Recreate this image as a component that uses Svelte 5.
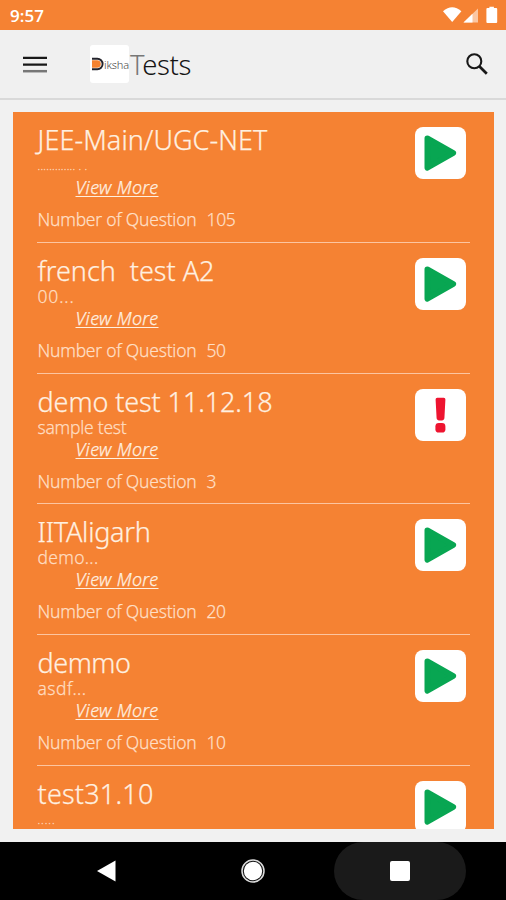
<script>
  const tests = [
    { title: 'JEE-Main/UGC-NET', w: 230, desc: '............. . .', dw: 50, tiny: true, count: '105', cw: 29, open: true },
    { title: 'french\u00a0 test A2', w: 177, desc: '00...', dw: 37, count: '50', cw: 19, open: true },
    { title: 'demo test 11.12.18', w: 235, desc: 'sample test', dw: 89, count: '3', cw: 9, open: false },
    { title: 'IITAligarh', w: 113, desc: 'demo...', dw: 61, count: '20', cw: 19, open: true },
    { title: 'demmo', w: 93, desc: 'asdf...', dw: 49, count: '10', cw: 19, open: true },
    { title: 'test31.10', w: 116, desc: '.....', dw: 18, tiny: true, count: '', cw: 0, open: true }
  ];

  // Tracks a line of text out so that it fills the given width.
  function fit(node, width) {
    const n = node.textContent.length;
    if (!n) return;
    const gap = (width - node.getBoundingClientRect().width) / n;
    node.style.letterSpacing = `${gap}px`;
  }
</script>

<div class="screen">
  <div class="status">
    <span class="clock" use:fit={34}>9:57</span>
    <svg class="signals" width="56" height="18" viewBox="0 0 56 18">
      <path d="M0 5.2Q9.2-2.6 18.4 5.2L9.2 16Z" fill="#fff" />
      <path d="M20.5 16.5L35 2.5V16.5Z" fill="#fbc6a2" />
      <path d="M20.5 16.5L29.5 7.8V16.5Z" fill="#fff" />
      <path d="M46.4 2V.8h4.5V2h2.3q1 0 1 1v13q0 1-1 1h-8.8q-1 0-1-1V3q0-1 1-1Z" fill="#fff" />
    </svg>
  </div>

  <header>
    <svg class="menu" width="24" height="18" viewBox="0 0 24 18">
      <path d="M0 1.8h24M0 8.6h24" stroke="#181818" stroke-width="2.3" />
      <path d="M0 15.2h24" stroke="#777" stroke-width="2.5" />
    </svg>
    <div class="logo">
      <svg width="12" height="14" viewBox="0 0 12 14">
        <path d="M0 3.2H5A3.8 3.8 0 0 1 5 10.8H0Z" fill="#f5822f" />
        <path d="M0 1.7H5.3A5.3 5.3 0 0 1 5.3 12.3H0" fill="none" stroke="#24242c" stroke-width="1.9" />
      </svg>
      <span use:fit={25}>iksha</span>
    </div>
    <h1 use:fit={61}><i>T</i>ests</h1>
    <svg class="search" width="22" height="22" viewBox="0 0 22 22" fill="none" stroke="#181818">
      <circle cx="8.3" cy="8.3" r="7" stroke-width="2.1" />
      <path d="M13.3 13.3L20.8 20.8" stroke-width="2.7" />
    </svg>
  </header>

  <main>
    <div class="list">
      {#each tests as t}
        <article>
          <div class="info">
            <h2><span use:fit={t.w}>{t.title}</span></h2>
            <p class="desc" class:tiny={t.tiny}><span use:fit={t.dw}>{t.desc}</span></p>
            {#if t.count}
              <p class="more"><span use:fit={83}>View More</span></p>
              <p class="count"><span use:fit={159}>Number of Question</span><span use:fit={t.cw}>{t.count}</span></p>
            {/if}
          </div>
          <div class="badge">
            <svg width="51" height="52" viewBox="0 0 51 52">
              {#if t.open}
                <path d="M12.3 11.2L38.3 26L12.3 40.8Z" fill="#08a652" stroke="#08a652" stroke-width="5.6" stroke-linejoin="round" />
              {:else}
                <path d="M22.3 8.8H28.7Q30.5 8.8 30.4 10.6L29.4 29.3Q29.1 31.6 25.5 31.6T21.6 29.3L20.6 10.6Q20.5 8.8 22.3 8.8Z" fill="#ee1430" />
                <rect x="20.4" y="34" width="10" height="9.6" rx="3.4" fill="#ee1430" />
              {/if}
            </svg>
          </div>
        </article>
      {/each}
    </div>
  </main>

  <nav>
    <div class="key"><svg width="19" height="22" viewBox="0 0 19 22"><path d="M0 11L18.5 .4V21.6Z" fill="#fff" /></svg></div>
    <div class="key">
      <svg width="24" height="24" viewBox="0 0 24 24">
        <circle cx="12" cy="12" r="11" fill="#111" stroke="#ddd" stroke-width="1.5" />
        <circle cx="12" cy="12" r="9.2" fill="#fff" />
      </svg>
    </div>
    <div class="key active"><svg width="20" height="20" viewBox="0 0 20 20"><rect width="20" height="20" rx="2" fill="#fff" /></svg></div>
  </nav>
</div>

<style>
  :global(body) { margin: 0; background: #f1f1f1; }
  .screen {
    width: 506px; height: 900px; overflow: hidden;
    display: flex; flex-direction: column;
    font-family: 'Noto Sans', 'Open Sans', sans-serif; font-weight: 300;
    background: #f1f1f1;
  }
  h1, h2, p { margin: 0; font-weight: 300; white-space: nowrap; }
  span { display: inline-block; white-space: nowrap; }
  svg { display: block; flex: none; }

  .status {
    height: 30px; flex: none; box-sizing: border-box; padding: 0 7px 0 10px;
    display: flex; align-items: center; justify-content: space-between;
    background: #f58233; color: #fff;
  }
  .clock { font: 600 17px/30px 'Open Sans', sans-serif; padding-top: 1px; }

  header {
    height: 70px; flex: none; box-sizing: border-box; padding: 2px 18px 0 23px;
    display: flex; align-items: center;
    background: #f0f0f0; border-bottom: 2px solid #d9d9d9;
  }
  .menu { margin-right: 43px; }
  .logo {
    width: 39px; height: 38px; box-sizing: border-box; padding: 0 0 0 2px; margin-bottom: 2px;
    display: flex; align-items: center; flex: none;
    background: #fff; border-radius: 3px; color: #444;
  }
  .logo span { font-size: 11px; line-height: 12px; padding-top: 1px; }
  h1 { font-size: 27.5px; line-height: 36px; color: #151515; margin-left: 1px; }
  h1 i { font-style: normal; color: #777; }
  .search { margin-left: auto; margin-bottom: 3px; }

  main { flex: 1; min-height: 0; padding: 12px 12px 13px 13px; }
  .list { height: 717px; overflow: hidden; background: #f58233; color: #fff0e0; -webkit-text-stroke: 0.25px currentColor; }
  article {
    height: 130.75px; box-sizing: border-box; margin: 0 24px; padding-top: 12px;
    display: flex; justify-content: space-between;
    border-bottom: 1px solid #fcc5a0;
  }
  .info { display: flex; flex-direction: column; padding-left: 0.5px; }
  h2 { font-size: 27px; line-height: 32px; }
  .desc { height: 20px; font-size: 17.5px; line-height: 19px; color: #ffdcc0; }
  .desc.tiny { font-size: 11px; line-height: 19px; }
  .more { padding-left: 38px; font-size: 18px; line-height: 22px; font-style: italic; }
  .more span { text-decoration: underline; text-underline-offset: 2px; text-decoration-thickness: 1px; }
  .count { display: flex; gap: 10px; margin-top: 10px; font-size: 17.5px; line-height: 22px; color: #ffdfc5; }
  .badge {
    width: 51px; height: 52px; margin: 3px 4px 0 0; flex: none;
    background: #fff; border-radius: 8px;
  }

  nav {
    height: 58px; flex: none; box-sizing: border-box; padding: 0 40px;
    display: flex; justify-content: space-between; align-items: center;
    background: #000;
  }
  .key { width: 132px; height: 58px; display: flex; align-items: center; justify-content: center; }
  .active { border-radius: 29px; background: #1a1a1a; }
</style>
